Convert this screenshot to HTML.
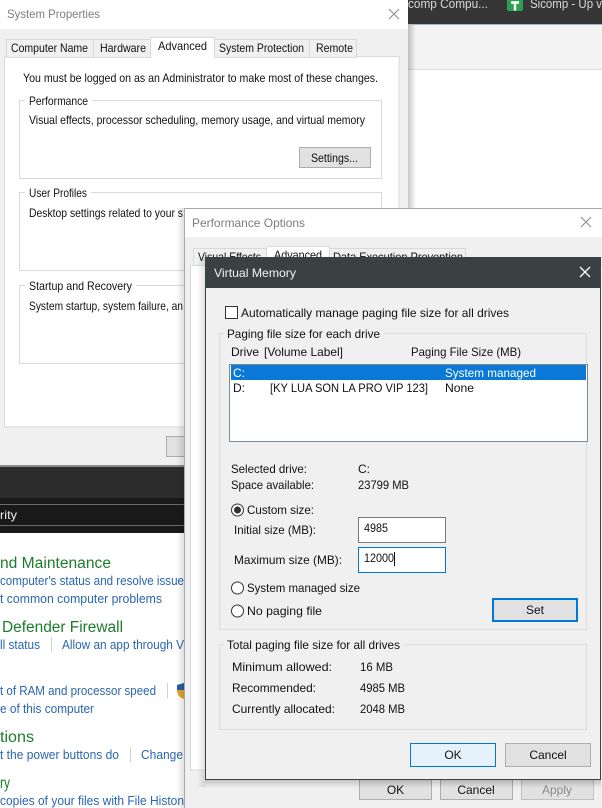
<!DOCTYPE html>
<html><head><meta charset="utf-8"><style>
html,body{margin:0;padding:0;background:#fff;width:602px;height:808px;overflow:hidden}
svg{display:block;filter:blur(.35px)}
text{font-family:"Liberation Sans",sans-serif;font-size:12px;fill:#111}
.l{fill:#2a66b0;font-size:12.5px}
.g{fill:#1c7c2c;font-size:15.5px}
.m{fill:#7d7d7d}
</style></head><body>
<svg width="602" height="808" viewBox="0 0 602 808" xmlns="http://www.w3.org/2000/svg">
<defs>
<linearGradient id="sr" x1="0" x2="1" y1="0" y2="0"><stop offset="0" stop-color="#000" stop-opacity=".22"/><stop offset="1" stop-color="#000" stop-opacity="0"/></linearGradient>
<linearGradient id="sl" x1="1" x2="0" y1="0" y2="0"><stop offset="0" stop-color="#000" stop-opacity=".12"/><stop offset="1" stop-color="#000" stop-opacity="0"/></linearGradient>
<linearGradient id="sb" x1="0" x2="0" y1="0" y2="1"><stop offset="0" stop-color="#000" stop-opacity=".2"/><stop offset="1" stop-color="#000" stop-opacity="0"/></linearGradient>
</defs>

<!-- top right browser -->
<rect x="408" y="0" width="194" height="24" fill="#363636"/>
<rect x="408" y="24" width="194" height="1" fill="#a9b8d0"/>
<rect x="408" y="25" width="194" height="44" fill="#f4f4f4"/>
<rect x="408" y="69" width="194" height="1" fill="#dcdcdc"/>
<text x="408" y="8" textLength="80" lengthAdjust="spacingAndGlyphs" style="fill:#d8d8d8;font-size:13px">comp Compu...</text>
<rect x="507" y="-3" width="16" height="14" rx="2" fill="#2aa052"/>
<path d="M511 2.5h8M515 2.5v8" stroke="#fff" stroke-width="2.5" fill="none"/>
<text x="530" y="8" textLength="72" lengthAdjust="spacingAndGlyphs" style="fill:#d8d8d8;font-size:13px">Sicomp - Up v</text>

<!-- bottom-left control panel -->
<rect x="0" y="465" width="184" height="2" fill="#8c8c8c"/>
<rect x="0" y="467" width="184" height="31" fill="#2c2c2c"/>
<rect x="0" y="498" width="184" height="35" fill="#191919"/>
<rect x="0" y="504" width="184" height="1" fill="#6a6a6a"/>
<rect x="0" y="525" width="184" height="1" fill="#6a6a6a"/>
<text x="0" y="519" textLength="17" lengthAdjust="spacingAndGlyphs" style="fill:#eee">rity</text>
<rect x="0" y="533" width="184" height="275" fill="#fff"/>
<text class="g" x="0" y="568" textLength="111" lengthAdjust="spacingAndGlyphs">nd Maintenance</text>
<text class="l" x="0" y="585" textLength="184" lengthAdjust="spacingAndGlyphs">computer's status and resolve issue</text>
<text class="l" x="0" y="603" textLength="162" lengthAdjust="spacingAndGlyphs">t common computer problems</text>
<text class="g" x="2" y="632" textLength="121" lengthAdjust="spacingAndGlyphs">Defender Firewall</text>
<text class="l" x="0" y="649" textLength="40" lengthAdjust="spacingAndGlyphs">ll status</text>
<rect x="51" y="637" width="1" height="15" fill="#d0d0d0"/>
<text class="l" x="62" y="649" textLength="122" lengthAdjust="spacingAndGlyphs">Allow an app through V</text>
<text class="l" x="0" y="695" textLength="156" lengthAdjust="spacingAndGlyphs">t of RAM and processor speed</text>
<rect x="167" y="683" width="1" height="15" fill="#d0d0d0"/>
<path d="M177 685l7-2v16c-4-1-7-4-7-9z" fill="#e0a92e"/>
<path d="M177 685l7-2v7h-7z" fill="#2a5da8"/>
<text class="l" x="0" y="713" textLength="94" lengthAdjust="spacingAndGlyphs">e of this computer</text>
<text class="g" x="0" y="742" textLength="34" lengthAdjust="spacingAndGlyphs">tions</text>
<text class="l" x="0" y="759" textLength="119" lengthAdjust="spacingAndGlyphs">t the power buttons do</text>
<rect x="130" y="747" width="1" height="15" fill="#d0d0d0"/>
<text class="l" x="141" y="759" textLength="42" lengthAdjust="spacingAndGlyphs">Change</text>
<text class="g" x="0" y="788" textLength="10" lengthAdjust="spacingAndGlyphs">ry</text>
<text class="l" x="0" y="805" textLength="184" lengthAdjust="spacingAndGlyphs">copies of your files with File Histon</text>

<!-- System Properties -->
<rect x="408" y="25" width="8" height="440" fill="url(#sr)"/>
<rect x="0" y="0" width="408" height="465" fill="#f0f0f0"/>
<rect x="0" y="0" width="408" height="29" fill="#fff"/>
<text class="m" x="7" y="18" textLength="93" lengthAdjust="spacingAndGlyphs">System Properties</text>
<path d="M389 9l10 10M399 9l-10 10" stroke="#8a8a8a" stroke-width="1" fill="none"/>
<rect x="4.5" y="56.5" width="394.5" height="370.5" fill="#fff" stroke="#d9d9d9"/>
<g fill="#f0f0f0" stroke="#d9d9d9">
<rect x="6.5" y="39.5" width="87" height="18"/>
<rect x="93.5" y="39.5" width="57" height="18"/>
<rect x="214.5" y="39.5" width="95" height="18"/>
<rect x="309.5" y="39.5" width="47" height="18"/>
</g>
<rect x="150.5" y="37.5" width="64" height="20" fill="#fff" stroke="#d9d9d9"/>
<rect x="151" y="55" width="63" height="3" fill="#fff"/>
<text x="11" y="52" textLength="77" lengthAdjust="spacingAndGlyphs">Computer Name</text>
<text x="100" y="52" textLength="46" lengthAdjust="spacingAndGlyphs">Hardware</text>
<text x="158" y="50" textLength="49" lengthAdjust="spacingAndGlyphs">Advanced</text>
<text x="219" y="52" textLength="85" lengthAdjust="spacingAndGlyphs">System Protection</text>
<text x="316" y="52" textLength="37" lengthAdjust="spacingAndGlyphs">Remote</text>
<text x="23" y="82" textLength="355" lengthAdjust="spacingAndGlyphs">You must be logged on as an Administrator to make most of these changes.</text>

<rect x="19.5" y="100.5" width="362" height="78" fill="none" stroke="#d9d9d9"/>
<rect x="25" y="97" width="67" height="8" fill="#fff"/>
<text x="29" y="105" textLength="59" lengthAdjust="spacingAndGlyphs">Performance</text>
<text x="29" y="124" textLength="336" lengthAdjust="spacingAndGlyphs">Visual effects, processor scheduling, memory usage, and virtual memory</text>
<rect x="299.5" y="147.5" width="71" height="20" fill="#e1e1e1" stroke="#adadad"/>
<text x="311" y="162" textLength="47" lengthAdjust="spacingAndGlyphs">Settings...</text>

<rect x="19.5" y="192.5" width="362" height="78" fill="none" stroke="#d9d9d9"/>
<rect x="25" y="189" width="66" height="8" fill="#fff"/>
<text x="29" y="197" textLength="58" lengthAdjust="spacingAndGlyphs">User Profiles</text>
<text x="29" y="217" textLength="154" lengthAdjust="spacingAndGlyphs">Desktop settings related to your s</text>

<rect x="19.5" y="285.5" width="362" height="78" fill="none" stroke="#d9d9d9"/>
<rect x="25" y="282" width="111" height="8" fill="#fff"/>
<text x="29" y="290" textLength="103" lengthAdjust="spacingAndGlyphs">Startup and Recovery</text>
<text x="29" y="310" textLength="154" lengthAdjust="spacingAndGlyphs">System startup, system failure, an</text>
<rect x="166.5" y="436.5" width="40" height="20" fill="#e1e1e1" stroke="#adadad"/>

<!-- Performance Options -->
<rect x="176" y="208" width="8" height="600" fill="url(#sl)"/>
<rect x="184" y="208" width="418" height="600" fill="#f0f0f0"/>
<path d="M184.5 808V208.500H602" fill="none" stroke="#a8a8a8"/>
<rect x="185" y="209" width="417" height="28" fill="#fff"/>
<text class="m" x="192" y="227" textLength="113" lengthAdjust="spacingAndGlyphs">Performance Options</text>
<path d="M581 217l10 10M591 217l-10 10" stroke="#8a8a8a" stroke-width="1" fill="none"/>
<rect x="190.500" y="265.500" width="420" height="504.500" fill="#fff" stroke="#d9d9d9"/>
<g fill="#f0f0f0" stroke="#d9d9d9">
<rect x="193.500" y="248.500" width="73" height="17"/>
<rect x="329.500" y="248.500" width="136" height="17"/>
</g>
<rect x="266.500" y="246.500" width="63" height="20" fill="#fff" stroke="#d9d9d9"/>
<text x="198" y="261" textLength="63" lengthAdjust="spacingAndGlyphs">Visual Effects</text>
<text x="274" y="259" textLength="48" lengthAdjust="spacingAndGlyphs">Advanced</text>
<text x="333" y="261" textLength="130" lengthAdjust="spacingAndGlyphs">Data Execution Prevention</text>
<rect x="185" y="771" width="417" height="37" fill="#f0f0f0"/>
<rect x="359.500" y="779.500" width="72" height="20" fill="#e1e1e1" stroke="#adadad"/>
<rect x="440.500" y="779.500" width="72" height="20" fill="#e1e1e1" stroke="#adadad"/>
<rect x="521.500" y="779.500" width="72" height="20" fill="#e1e1e1" stroke="#bfbfbf"/>
<text x="395.500" y="794" text-anchor="middle">OK</text>
<text x="476" y="794" text-anchor="middle">Cancel</text>
<text x="557" y="794" text-anchor="middle" style="fill:#8a8a8a">Apply</text>

<!-- Virtual Memory -->
<rect x="197" y="257" width="8" height="530" fill="url(#sl)"/>
<rect x="205" y="780" width="396" height="8" fill="url(#sb)"/>
<rect x="205.500" y="257.500" width="395" height="522" fill="#f0f0f0" stroke="#3b4042"/>
<rect x="205" y="257" width="396" height="31" fill="#3b4042"/>
<text x="214" y="277" textLength="82" lengthAdjust="spacingAndGlyphs" style="fill:#f2f2f2">Virtual Memory</text>
<path d="M580 267l10 10M590 267l-10 10" stroke="#fff" stroke-width="1.300" fill="none"/>

<rect x="225.500" y="306.500" width="12" height="12" fill="#fff" stroke="#333"/>
<text x="241" y="317" textLength="268" lengthAdjust="spacingAndGlyphs">Automatically manage paging file size for all drives</text>

<rect x="219.500" y="333.500" width="367" height="296" fill="none" stroke="#dcdcdc"/>
<rect x="224" y="330" width="160" height="8" fill="#f0f0f0"/>
<text x="227" y="338" textLength="153" lengthAdjust="spacingAndGlyphs">Paging file size for each drive</text>
<text x="231" y="356" textLength="28" lengthAdjust="spacingAndGlyphs">Drive</text>
<text x="264" y="356" textLength="79" lengthAdjust="spacingAndGlyphs">[Volume Label]</text>
<text x="411" y="356" textLength="110" lengthAdjust="spacingAndGlyphs">Paging File Size (MB)</text>
<rect x="229.500" y="364.500" width="358" height="77" fill="#fff" stroke="#7a8a96"/>
<rect x="231" y="365" width="355" height="15" fill="#0a78d7"/>
<text x="233" y="377" style="fill:#fff">C:</text>
<text x="445" y="377" textLength="91" lengthAdjust="spacingAndGlyphs" style="fill:#fff">System managed</text>
<text x="233" y="392">D:</text>
<text x="270" y="392" textLength="158" lengthAdjust="spacingAndGlyphs">[KY LUA SON LA PRO VIP 123]</text>
<text x="445" y="392" textLength="29" lengthAdjust="spacingAndGlyphs">None</text>

<text x="231" y="473" textLength="76" lengthAdjust="spacingAndGlyphs">Selected drive:</text>
<text x="358" y="473">C:</text>
<text x="231" y="489" textLength="83" lengthAdjust="spacingAndGlyphs">Space available:</text>
<text x="358" y="489" textLength="51" lengthAdjust="spacingAndGlyphs">23799 MB</text>

<circle cx="237.500" cy="510" r="6" fill="#fff" stroke="#333"/>
<circle cx="237.500" cy="510" r="3.500" fill="#333"/>
<text x="247" y="514" textLength="67" lengthAdjust="spacingAndGlyphs">Custom size:</text>
<text x="234" y="534" textLength="82" lengthAdjust="spacingAndGlyphs">Initial size (MB):</text>
<rect x="358.500" y="517.500" width="87" height="25" fill="#fff" stroke="#7a7a7a"/>
<text x="364" y="532" textLength="24" lengthAdjust="spacingAndGlyphs">4985</text>
<text x="234" y="564" textLength="108" lengthAdjust="spacingAndGlyphs">Maximum size (MB):</text>
<rect x="358.500" y="547.500" width="87" height="25" fill="#fff" stroke="#0078d7"/>
<text x="364" y="562" textLength="30" lengthAdjust="spacingAndGlyphs">12000</text>
<rect x="394" y="552" width="1" height="14" fill="#111"/>

<circle cx="237.500" cy="588" r="6" fill="#fff" stroke="#333"/>
<text x="247" y="592" textLength="113" lengthAdjust="spacingAndGlyphs">System managed size</text>
<circle cx="237.500" cy="611" r="6" fill="#fff" stroke="#333"/>
<text x="247" y="615" textLength="75" lengthAdjust="spacingAndGlyphs">No paging file</text>
<rect x="493" y="599" width="84" height="22" fill="#e1e1e1" stroke="#0078d7" stroke-width="2"/>
<text x="535" y="614" text-anchor="middle">Set</text>

<rect x="219.500" y="644.500" width="367" height="85" fill="none" stroke="#dcdcdc"/>
<rect x="224" y="641" width="180" height="8" fill="#f0f0f0"/>
<text x="227" y="649" textLength="173" lengthAdjust="spacingAndGlyphs">Total paging file size for all drives</text>
<text x="232" y="671" textLength="100" lengthAdjust="spacingAndGlyphs">Minimum allowed:</text>
<text x="360" y="671" textLength="33" lengthAdjust="spacingAndGlyphs">16 MB</text>
<text x="232" y="692" textLength="84" lengthAdjust="spacingAndGlyphs">Recommended:</text>
<text x="360" y="692" textLength="45" lengthAdjust="spacingAndGlyphs">4985 MB</text>
<text x="232" y="713" textLength="103" lengthAdjust="spacingAndGlyphs">Currently allocated:</text>
<text x="360" y="713" textLength="45" lengthAdjust="spacingAndGlyphs">2048 MB</text>

<rect x="410.500" y="743.500" width="85" height="23" fill="#e5f1fb" stroke="#0078d7"/>
<text x="453" y="759" text-anchor="middle">OK</text>
<rect x="505.500" y="743.500" width="85" height="23" fill="#e1e1e1" stroke="#adadad"/>
<text x="548" y="759" text-anchor="middle">Cancel</text>
</svg>
</body></html>
